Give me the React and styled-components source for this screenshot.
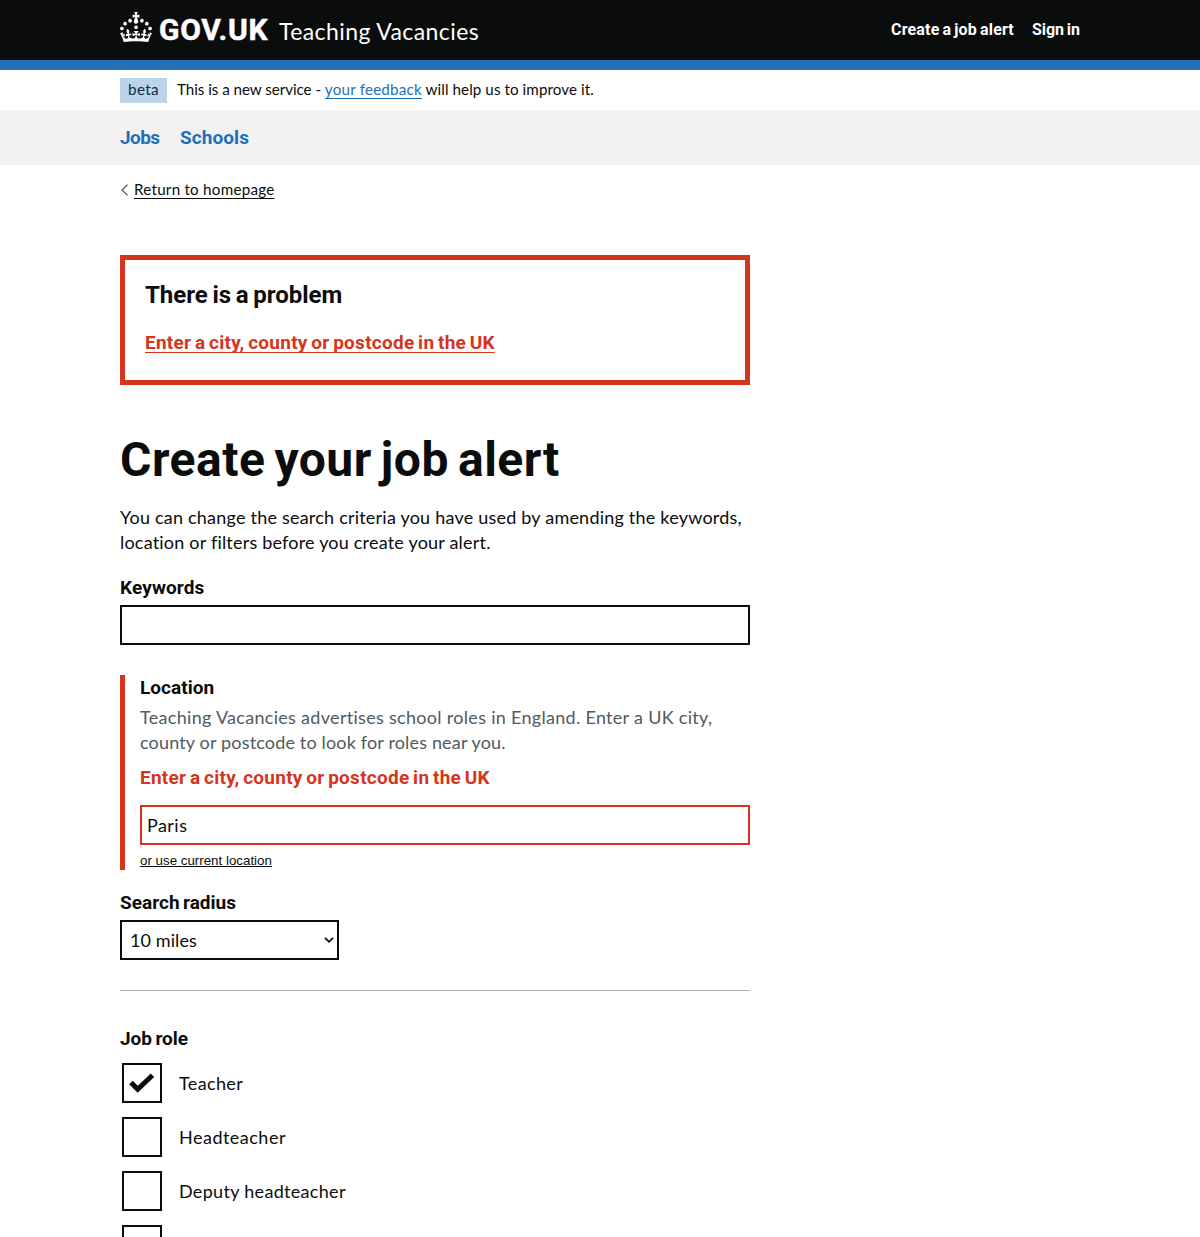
import React from 'react';
import styled, { createGlobalStyle, css } from 'styled-components';

const colours = {
  black: '#0b0c0c',
  blue: '#1d70b8',
  brand: '#2670b8',
  red: '#d4351c',
  grey: '#505a5f',
  border: '#b1b4b6',
  light: '#f3f2f1',
};

const regular = css`
  font-family: Lato, "Open Sans", sans-serif;
  font-weight: 400;
  word-spacing: normal;
`;
const bold = css`
  font-family: Roboto, "Open Sans", sans-serif;
  font-weight: 700;
  font-size: 19px;
  word-spacing: -0.07em;
`;

const GlobalStyle = createGlobalStyle`
  *, *::before, *::after { box-sizing: border-box; }
  body { margin: 0; background: #fff; color: ${colours.black}; }
`;

const Page = styled.div`
  height: 100vh;
  overflow: hidden;
  font-size: 18px;
  line-height: 25px;
  ${regular}
`;

const Container = styled.div`
  width: 960px;
  margin: 0 auto;
`;

const Spaced = styled.span`
  letter-spacing: ${(p) => p.$ls || 0}px;
`;

const Header = styled.header`
  height: 70px;
  background: ${colours.black};
  border-bottom: 10px solid ${colours.brand};
  color: #fff;
`;

const HeaderRow = styled(Container)`
  display: flex;
  align-items: flex-start;
`;

const Crown = styled.svg`
  width: 32px;
  height: 30px;
  margin-top: 12px;
  fill: #fff;
`;

const Logotype = styled.span`
  ${bold}
  width: 110px;
  margin: 13px 0 0 7px;
  font-size: 30px;
  line-height: 34px;
  letter-spacing: 0.75px;
  -webkit-text-stroke: 0.5px #fff;
  white-space: nowrap;
`;

const ServiceName = styled.span`
  margin: 16px 0 0 10px;
  font-size: 23px;
  line-height: 30px;
  letter-spacing: 0.41px;
`;

const HeaderNav = styled.nav`
  ${bold}
  display: flex;
  gap: 18px;
  margin: 20px 0 0 auto;
  font-size: 16px;
  line-height: 20px;
`;

const PhaseBanner = styled(Container)`
  display: flex;
  align-items: flex-start;
  height: 40px;
  padding-top: 8px;
  font-size: 15.2px;
  line-height: 22px;
`;

const PhaseTag = styled.strong`
  ${regular}
  width: 47px;
  height: 25px;
  margin-right: 10px;
  background: #bbd4ea;
  color: #0c2d4a;
  text-align: center;
  letter-spacing: 0.39px;
`;

const Link = styled.a`
  color: ${(p) => p.$colour || colours.black};
  text-decoration: underline;
  text-decoration-thickness: 1px;
  text-underline-offset: 3px;
  text-decoration-skip-ink: none;
  letter-spacing: ${(p) => p.$ls || 0}px;
`;

const ServiceNav = styled.nav`
  height: 55px;
  background: ${colours.light};
`;

const ServiceNavList = styled(Container)`
  ${bold}
  display: flex;
  gap: 20px;
  padding-top: 15px;
  color: ${colours.blue};
`;

const NavItem = styled.span`
  width: ${(p) => p.$w}px;
  white-space: nowrap;
  letter-spacing: ${(p) => p.$ls || 0}px;
`;

const BackLink = styled.div`
  display: flex;
  align-items: flex-start;
  height: 20px;
  margin-top: 15px;
  font-size: 15.2px;
  line-height: 18px;
`;

const Chevron = styled.svg`
  width: 14px;
  height: 14px;
  margin-top: 3px;
  fill: none;
  stroke: ${colours.grey};
  stroke-width: 1.2;
`;

const Column = styled.main`
  width: 630px;
  padding-top: 55px;
`;

const ErrorSummary = styled.section`
  ${bold}
  height: 130px;
  padding: 20px;
  border: 5px solid ${colours.red};
`;

const ErrorTitle = styled.h2`
  margin: 0 0 20px;
  font-size: 24px;
  line-height: 30px;
`;

const Title = styled.h1`
  ${bold}
  margin: 50px 0 20px;
  font-size: 48px;
  line-height: 50px;
  letter-spacing: 0.5px;
`;

const Lines = styled.p`
  display: flex;
  flex-direction: column;
  margin: ${(p) => p.$margin};
  color: ${(p) => p.$colour || colours.black};
  white-space: nowrap;
`;

const Label = styled.label`
  ${bold}
  display: block;
  letter-spacing: ${(p) => p.$ls || 0}px;
`;

const Input = styled.input`
  ${regular}
  display: block;
  width: 100%;
  height: 40px;
  margin: 5px 0 0;
  padding: 5px;
  border: 2px solid ${(p) => (p.$error ? colours.red : colours.black)};
  border-radius: 0;
  color: ${colours.black};
  font-size: 18px;
  line-height: 25px;
  letter-spacing: 0.45px;
  outline: 0;
`;

const ErrorGroup = styled.div`
  height: 195px;
  margin: 30px 0 20px;
  padding-left: 15px;
  border-left: 5px solid ${colours.red};
`;

const ErrorMessage = styled.p`
  ${bold}
  margin: 0 0 15px;
  color: ${colours.red};
  letter-spacing: 0.26px;
`;

const LocationButton = styled.button`
  display: block;
  margin: 8px 0 0;
  padding: 0;
  border: 0;
  background: none;
  color: ${colours.black};
  font: 13.333px/15px "Liberation Sans", Arial, sans-serif;
  text-decoration: underline;
`;

const Select = styled.div`
  display: flex;
  align-items: center;
  justify-content: space-between;
  width: 219px;
  height: 40px;
  margin-top: 5px;
  padding: 0 3px 0 8px;
  border: 2px solid ${colours.black};
`;

const SelectArrow = styled.svg`
  width: 10px;
  height: 8px;
  fill: none;
  stroke: ${colours.black};
  stroke-width: 1.8;
`;

const Rule = styled.hr`
  height: 1px;
  margin: 30px 0 35px;
  border: 0;
  background: ${colours.border};
`;

const CheckboxList = styled.div`
  display: flex;
  flex-direction: column;
  gap: 14px;
  padding: 12px 0 0 2px;
`;

const CheckboxRow = styled.div`
  display: flex;
  align-items: center;
  gap: 17px;
  height: 40px;
`;

const Box = styled.span`
  display: grid;
  place-items: center;
  width: 40px;
  height: 40px;
  border: 2px solid ${colours.black};
`;

const Tick = styled.svg`
  width: 36px;
  height: 36px;
  fill: none;
  stroke: ${colours.black};
  stroke-width: 5;
`;

const roles = [
  { name: 'Teacher', ls: 0.35, checked: true },
  { name: 'Headteacher', ls: 0.49 },
  { name: 'Deputy headteacher', ls: 0.31 },
  { name: '' },
];

const crownPath =
  'M22.6 10.4c-1 .4-2-.1-2.4-1-.4-.9.1-2 1-2.4.9-.4 2 .1 2.4 1s-.1 2-1 2.4m-5.9 6.7c-.9.4-2-.1-2.4-1-.4-.9.1-2 1-2.4.9-.4 2 .1 2.4 1s-.1 2-1 2.4m10.8-3.7c-1 .4-2-.1-2.4-1-.4-.9.1-2 1-2.4.9-.4 2 .1 2.4 1s0 2-1 2.4m3.3 4.8c-1 .4-2-.1-2.4-1-.4-.9.1-2 1-2.4.9-.4 2 .1 2.4 1s-.1 2-1 2.4M17 4.7l2.3 1.2V2.5l-2.3.7-.2-.2.9-3h-3.4l.9 3-.2.2c-.1.1-2.3-.7-2.3-.7v3.4L15 4.7c.1.1.1.2.2.2l-1.3 4c-.1.2-.1.4-.1.6 0 1.1.8 2 1.9 2.2h.7c1-.2 1.9-1.1 1.9-2.1 0-.2 0-.4-.1-.6l-1.3-4c-.1-.2 0-.2.1-.3m-7.6 5.7c.9.4 2-.1 2.4-1 .4-.9-.1-2-1-2.4-.9-.4-2 .1-2.4 1s0 2 1 2.4m-5 3c.9.4 2-.1 2.4-1 .4-.9-.1-2-1-2.4-.9-.4-2 .1-2.4 1s.1 2 1 2.4m-3.2 4.8c.9.4 2-.1 2.4-1 .4-.9-.1-2-1-2.4-.9-.4-2 .1-2.4 1s0 2 1 2.4m14.8 11c4.4 0 8.6.3 12.3.8 1.1-4.5 2.4-7 3.7-8.8l-2.5-.9c.2 1.3.3 1.9 0 2.7-.4-.4-.8-1.1-1.1-2.3l-1.2 4c.7-.5 1.3-.8 2-.9-1.1 2.5-2.6 3.1-3.5 3-1.1-.2-1.7-1.2-1.5-2.1.3-1.2 1.5-1.5 2.1-.1 1.1-2.3-.8-3-2-2.3 1.9-1.9 2.1-3.5.6-5.6-2.1 1.6-2.1 3.2-1.2 5.5-1.2-1.4-3.2-.6-2.5 1.6.9-1.4 2.1-.5 1.9.8-.2 1.1-1.7 2.1-3.5 1.9-2.7-.2-2.9-2.1-2.9-3.6.7-.1 1.9.5 2.9 1.9l.4-4.3c-1.1 1.1-2.1 1.4-3.2 1.4.4-1.2 2.1-3 2.1-3h-5.4s1.7 1.9 2.1 3c-1.1 0-2.1-.2-3.2-1.4l.4 4.3c1-1.4 2.2-2 2.9-1.9-.1 1.5-.2 3.4-2.9 3.6-1.9.2-3.4-.8-3.5-1.9-.2-1.3 1-2.2 1.9-.8.7-2.3-1.2-3-2.5-1.6.9-2.2.9-3.9-1.2-5.5-1.5 2-1.3 3.7.6 5.6-1.2-.7-3.1 0-2 2.3.6-1.4 1.8-1.1 2.1.1.2.9-.3 1.9-1.5 2.1-.9.2-2.4-.5-3.5-3 .6 0 1.2.3 2 .9l-1.2-4c-.3 1.1-.7 1.9-1.1 2.3-.3-.8-.2-1.4 0-2.7l-2.9.9C1.3 23 2.6 25.5 3.7 30c3.7-.5 7.9-.8 12.3-.8';

export default function App() {
  return (
    <Page>
      <GlobalStyle />
      <Header>
        <HeaderRow>
          <Crown viewBox="0 0 32 30"><path d={crownPath} /></Crown>
          <Logotype>GOV.UK</Logotype>
          <ServiceName>Teaching Vacancies</ServiceName>
          <HeaderNav>
            <Spaced $ls={0.17}>Create a job alert</Spaced>
            <Spaced $ls={-0.03}>Sign in</Spaced>
          </HeaderNav>
        </HeaderRow>
      </Header>
      <PhaseBanner>
        <PhaseTag>beta</PhaseTag>
        <span>
          <Spaced $ls={-0.05}>This is a new service - </Spaced>
          <Link href="#" $colour={colours.blue} $ls={0.2}>your feedback</Link>
          <Spaced $ls={0.07}> will help us to improve it.</Spaced>
        </span>
      </PhaseBanner>
      <ServiceNav>
        <ServiceNavList>
          <NavItem $w={40} $ls={-0.6}>Jobs</NavItem>
          <NavItem $w={69} $ls={0.07}>Schools</NavItem>
        </ServiceNavList>
      </ServiceNav>
      <Container>
        <BackLink>
          <Chevron viewBox="0 0 14 14"><path d="M7.5 1.8 2 7l5.5 5.2" /></Chevron>
          <Link href="#" $ls={0.24}>Return to homepage</Link>
        </BackLink>
        <Column>
          <ErrorSummary>
            <ErrorTitle>There is a problem</ErrorTitle>
            <Link href="#" $colour={colours.red} $ls={0.26}>Enter a city, county or postcode in the UK</Link>
          </ErrorSummary>
          <Title>Create your job alert</Title>
          <Lines $margin="0 0 20px">
            <Spaced $ls={0.215}>You can change the search criteria you have used by amending the keywords,</Spaced>
            <Spaced $ls={0.2}>location or filters before you create your alert.</Spaced>
          </Lines>
          <Label htmlFor="keywords" $ls={0.13}>Keywords</Label>
          <Input id="keywords" />
          <ErrorGroup>
            <Label htmlFor="location" $ls={0.05}>Location</Label>
            <Lines $margin="5px 0 10px" $colour={colours.grey}>
              <Spaced $ls={0.3}>Teaching Vacancies advertises school roles in England. Enter a UK city,</Spaced>
              <Spaced $ls={0.16}>county or postcode to look for roles near you.</Spaced>
            </Lines>
            <ErrorMessage>Enter a city, county or postcode in the UK</ErrorMessage>
            <Input id="location" $error defaultValue="Paris" />
            <LocationButton type="button">or use current location</LocationButton>
          </ErrorGroup>
          <Label $ls={0.02}>Search radius</Label>
          <Select>
            <Spaced $ls={0.1}>10 miles</Spaced>
            <SelectArrow viewBox="0 0 10 8"><path d="M1 1.8 5 5.8 9 1.8" /></SelectArrow>
          </Select>
          <Rule />
          <Label as="div">Job role</Label>
          <CheckboxList>
            {roles.map((role, i) => (
              <CheckboxRow key={i}>
                <Box>
                  {role.checked && (
                    <Tick viewBox="0 0 36 36"><path d="M7 17.5 13.7 24.2 28.5 10.3" /></Tick>
                  )}
                </Box>
                <Spaced $ls={role.ls}>{role.name}</Spaced>
              </CheckboxRow>
            ))}
          </CheckboxList>
        </Column>
      </Container>
    </Page>
  );
}
